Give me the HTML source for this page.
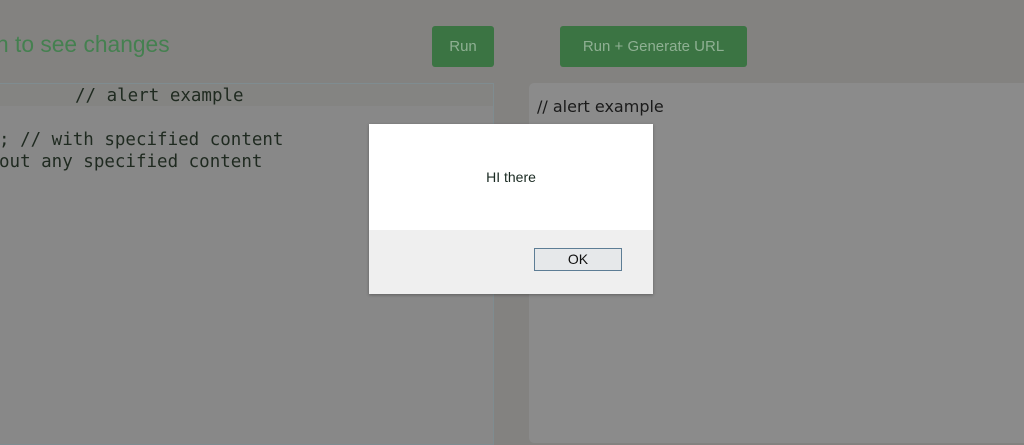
<!DOCTYPE html>
<html><head><style>
body{margin:0;width:1024px;height:434px;overflow:hidden;background:#838280;font-family:"Liberation Sans",sans-serif;position:relative}
.h{position:absolute;left:-4px;top:31px;font-size:22.8px;color:#458050}
.btn{position:absolute;top:26px;height:41px;background:#3b7443;border-radius:3px;color:#8fb093;font-size:15px;line-height:41px;text-align:center}
.ed{position:absolute;left:-2px;top:83px;width:494px;height:360px;background:#888888;border:1px solid #7f8c90}
.edh{position:absolute;left:0;top:0;right:0;height:22px;background:#848482}
.mono{font-family:"DejaVu Sans Mono",monospace;font-size:17.5px;color:#1f2a20;position:absolute;white-space:pre}
.rp{position:absolute;left:529px;top:83px;width:500px;height:360px;background:#8b8b8b;border-radius:5px}
.dlg{position:absolute;left:369px;top:124px;width:284px;height:170px;background:#fff;box-shadow:0 1px 3px rgba(0,0,0,.3)}
.ft{position:absolute;left:0;right:0;top:106px;bottom:0;background:#efefef}
.ok{position:absolute;left:165px;top:18px;width:86px;height:21px;border:1px solid #5d7d95;background:#e6e8ea;font-size:14px;text-align:center;line-height:21px;color:#111}
</style></head><body>
<div class="h">n to see changes</div>
<div class="btn" style="left:432px;width:62px">Run</div>
<div class="btn" style="left:560px;width:187px">Run + Generate URL</div>
<div class="ed"><div class="edh"></div>
<div class="mono" style="left:76px;top:2px">// alert example</div>
<div class="mono" style="left:0;top:46px">; // with specified content</div>
<div class="mono" style="left:0;top:68px">out any specified content</div>
</div>
<div class="rp"><div style="position:absolute;left:8px;top:14px;font-family:'DejaVu Sans',sans-serif;font-size:16px;color:#1a1a1a">// alert example</div></div>
<div class="dlg"><div style="position:absolute;top:45px;width:100%;text-align:center;font-size:14px;color:#1a2a22">HI there</div>
<div class="ft"><div class="ok">OK</div></div></div>
</body></html>
